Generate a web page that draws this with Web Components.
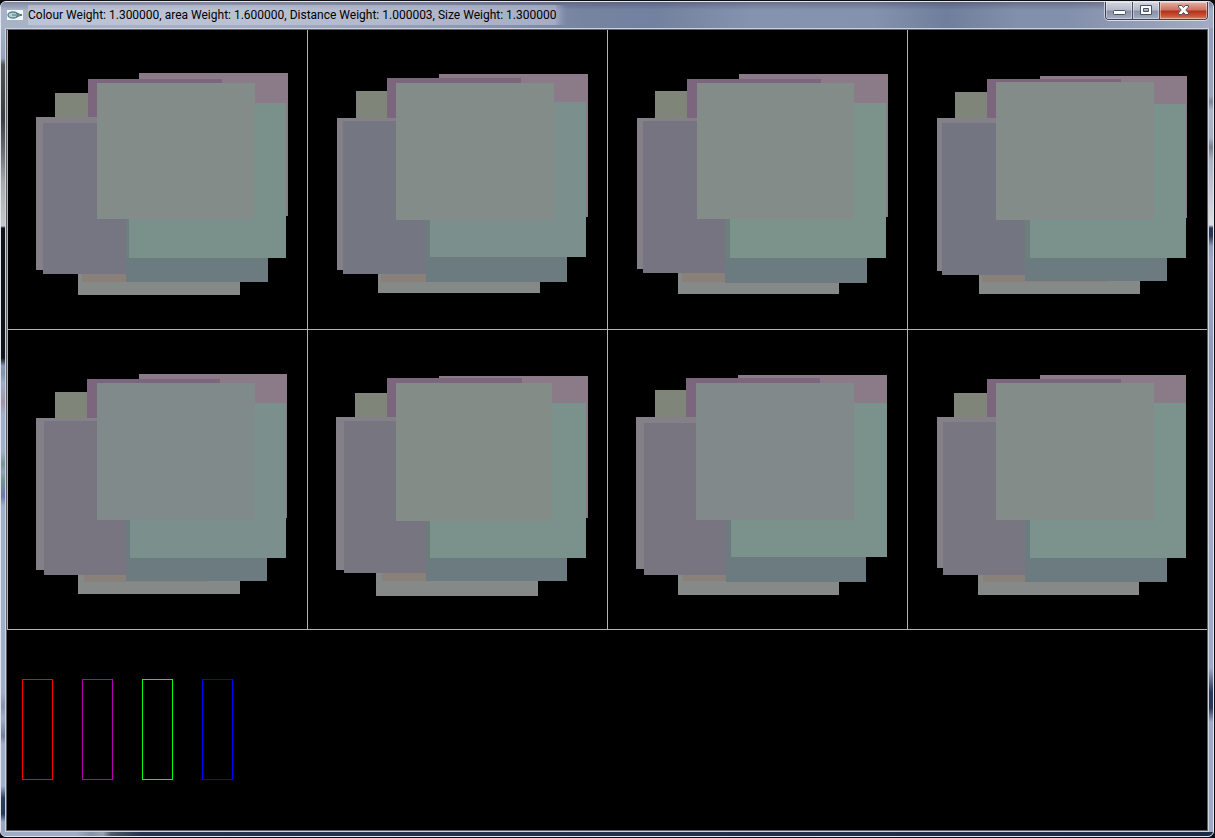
<!DOCTYPE html>
<html lang="en">
<head>
<meta charset="utf-8">
<title>Colour Weight: 1.300000, area Weight: 1.600000, Distance Weight: 1.000003, Size Weight: 1.300000</title>
<style>
  html, body { margin: 0; background: #0c0c12; }
  body { font: 12px/16px "Segoe UI", Roboto, "Liberation Sans", sans-serif; color: #000; }
</style>
</head>
<body>
<glass-window>
  <title-bar slot="title">Colour Weight: 1.300000, area Weight: 1.600000, Distance Weight: 1.000003, Size Weight: 1.300000</title-bar>
  <population-grid></population-grid>
  <weight-bars></weight-bars>
</glass-window>

<script>
const define = (name, html, setup) => {
  const template = document.createElement('template');
  template.innerHTML = html;
  customElements.define(name, class extends HTMLElement {
    constructor() {
      super();
      this.attachShadow({ mode: 'open' }).append(template.content.cloneNode(true));
    }
    connectedCallback() { if (setup) setup(this, this.shadowRoot); }
  });
};

define('glass-window', `
  <style>
    :host {
      display: block; box-sizing: border-box; min-height: 100vh;
      padding: 1px 1px 1px 0; background: #0c0c12;
    }
    .frame {
      display: flex; flex-direction: column; box-sizing: border-box;
      min-height: calc(100vh - 2px);
      border: 1px solid #e3e6ee; border-radius: 6px; overflow: hidden;
      background: #a0aac4;
    }
    .row { display: flex; flex: 1; }
    .edge { width: 4px; flex: none; }
    .left {
      background: linear-gradient(#a4b2c6, #93a2bc 30px, #4d5150 37px, #393d3d 90px, #6c7070 125px,
        #a8abab 155px, #c6c8c8 198px, #0e1315 200px, #0e1315 330px, #8496b8 338px, #8391aa 346px,
        #9faec8 355px, #a195a9 374px, #a0afcb 386px, #a0afcb 424px, #74958f 436px, #93a3b6 444px,
        #74958f 452px, #6d76b5 468px, #a0aec9 478px, #a0aec9 665px, #8793aa 678px, #a0aec9 690px,
        #748096 708px, #a0aec9 716px, #a0aec9 758px, #2a3d5c 770px, #22385a 786px, #9aa8c4 794px);
    }
    .right {
      background: linear-gradient(#929eb8, #9aa5bd 68px, #7c8594 74px, #aeb4ca 82px, #a9afc4 110px,
        #7b7e86 119px, #abb2c4 132px, #dedee1 197px, #2b3554 200px, #2b3554 208px, #919bb6 218px,
        #a3abc8 235px, #8f9ab4 330px, #a3abc8 390px, #a0aac4 640px, #2c3858 664px, #2c3858 680px,
        #a0aac4 694px, #a0aac4);
    }
    .client {
      flex: 1; min-width: 0; background: #000;
      border: 1px solid #5c5f6a; outline: 1px solid #cfd3dd; margin: 1px;
    }
    .bottom {
      height: 4px; flex: none;
      background: linear-gradient(90deg, #a0acc6 75px, #8692a6 90px, #98a2b2 102px, #4e5a68 110px,
        #24344e 140px, #1c2c48);
    }
  </style>
  <div class="frame">
    <slot name="title"></slot>
    <div class="row">
      <div class="edge left"></div>
      <main class="client"><slot></slot></main>
      <div class="edge right"></div>
    </div>
    <div class="bottom"></div>
  </div>`);

define('title-bar', `
  <style>
    :host {
      display: flex; align-items: center; gap: 5px; height: 26px; padding: 0 5px 0 6px; flex: none;
      background:
        linear-gradient(rgba(50,50,80,.35), transparent 8px),
        linear-gradient(90deg, #a9b3c7, #a4adc2 20%, #8d98b2 38%, #7684a2 48%, #7381a0 54%,
          #8593af 62%, #8492ae 72%, #6f7e9c 78%, #8390ab 84%, #8390ab 88%, #a2abc2 100%);
    }
    .logo { flex: none; display: block; }
    h1 {
      flex: 1; min-width: 0; margin: 0; font: inherit; white-space: nowrap; overflow: hidden;
    }
    h1 span {
      display: inline-block; height: 20px; line-height: 20px;
      background: rgba(214,218,232,.45); box-shadow: 0 0 8px 4px rgba(214,218,232,.45);
    }
    .buttons {
      display: flex; align-self: flex-start; box-sizing: border-box; height: 18px;
      border: 1px solid #3c4256; border-top: 0; border-radius: 0 0 4px 4px;
      box-shadow: 0 1px 0 #d9dde8, 1px 0 0 #c8cedc, -1px 0 0 #c8cedc; overflow: hidden;
    }
    button {
      display: grid; place-items: center; box-sizing: border-box; width: 27px; padding: 0; border: 0;
      border-right: 1px solid #4a5064;
      background: linear-gradient(#d0d4dd, #b4bac9 8px, #8890a5 9px, #a4adc2);
      box-shadow: inset 0 0 0 1px rgba(255,255,255,.4);
    }
    .close {
      width: 47px; border-right: 0;
      background: linear-gradient(#e3b0a4, #cc7260 8px, #b23019 9px, #cb5437 14px, #d98468);
    }
    svg { display: block; }
  </style>
  <svg class="logo" width="16" height="10" viewBox="0 0 16 10" aria-hidden="true">
    <rect width="16" height="10" fill="#f4f7f8"/>
    <ellipse cx="6" cy="5" rx="5" ry="3" fill="#b8d0d4" stroke="#4b8791" stroke-width="1.4"/>
    <path d="M5 5h10M9 3l6 2-6 2" fill="none" stroke="#4f747c" stroke-width="1"/>
  </svg>
  <h1><span><slot></slot></span></h1>
  <div class="buttons">
    <button type="button" aria-label="Minimise">
      <svg width="13" height="18" viewBox="0 0 13 18"><rect x=".5" y="8.500" width="12" height="4" rx="1" fill="#fff" stroke="#4b5169"/></svg>
    </button>
    <button type="button" aria-label="Maximise">
      <svg width="12" height="18" viewBox="0 0 12 18"><path fill-rule="evenodd" d="M.5 3.500h11v9H.5zM3.500 6.500v3h5v-3z" fill="#fff" stroke="#4b5169"/></svg>
    </button>
    <button type="button" class="close" aria-label="Close">
      <svg width="13" height="18" viewBox="0 0 13 18"><path d="M1.500 3.500h3.200l1.800 2 1.800-2h3.200v1.500L8.800 8l2.700 3v1.500H8.300l-1.800-2-1.800 2H1.500V11l2.700-3-2.700-3z" fill="#fff" stroke="#5a4a5e"/></svg>
    </button>
  </div>`);

/* One individual: overlapping painted rectangles on a 299-unit canvas. */
define('genome-cell', `
  <style>
    :host { display: block; border: 0 solid #b4b4b4; border-width: 0 0 1px 1px; }
    svg { display: block; width: 100%; height: auto; }
  </style>
  <svg viewBox="0 0 299 299" shape-rendering="crispEdges" role="img" aria-label="Individual"></svg>`,
  (host, root) => {
    const svg = root.querySelector('svg');
    svg.replaceChildren();
    for (const [x0, y0, x1, y1, fill] of host.shapes || []) {
      const rect = document.createElementNS('http://www.w3.org/2000/svg', 'rect');
      const attrs = { x: x0, y: y0, width: x1 - x0, height: y1 - y0, fill };
      for (const key in attrs) rect.setAttribute(key, attrs[key]);
      svg.append(rect);
    }
  });

const population = [
  { pink: [131,43,280,186], purple: [80,49,214], olive: [47,63], grey: [28,87,240], slate: [35,93,244], base: [70,232,265], brown: [74,252], steel: [118,260,252], teal: [121,73,278,228], top: [89,53,247,189], colours: ['#757681','#7a918b','#838c89','#6d807f'] },
  { pink: [131,44,280,187], purple: [79,48,213], olive: [48,61], grey: [29,88,240], slate: [35,91,244], base: [70,232,263], brown: [73,252], steel: [118,259,252], teal: [122,72,278,227], top: [88,53,246,190], colours: ['#747682','#7b908c','#838c89','#6b7d7c'] },
  { pink: [131,44,280,187], purple: [79,49,213], olive: [47,61], grey: [29,88,239], slate: [35,91,243], base: [70,231,264], brown: [74,252], steel: [117,259,253], teal: [122,73,278,228], top: [89,53,246,189], colours: ['#777481','#7b938b','#838c89','#6c7f7c'] },
  { pink: [132,46,279,188], purple: [79,49,213], olive: [47,62], grey: [29,88,241], slate: [34,93,245], base: [71,232,264], brown: [74,252], steel: [117,259,251], teal: [122,74,278,228], top: [88,52,246,190], colours: ['#737581','#7a918c','#838c89','#6c7f7d'] },
  { pink: [131,44,279,188], purple: [79,49,212], olive: [47,62], grey: [28,88,240], slate: [36,91,245], base: [70,232,264], brown: [76,252], steel: [118,259,251], teal: [122,73,278,228], top: [89,53,247,190], colours: ['#787581','#7b908c','#818a8b','#6b7b7f'] },
  { pink: [131,46,280,188], purple: [79,48,214], olive: [47,63], grey: [28,87,240], slate: [36,91,243], base: [68,230,266], brown: [74,251], steel: [118,259,251], teal: [122,73,278,228], top: [88,53,244,191], colours: ['#777680','#7a928b','#838c87','#6b7d7b'] },
  { pink: [130,45,279,188], purple: [78,48,212], olive: [47,60], grey: [28,87,239], slate: [36,93,245], base: [70,231,265], brown: [75,251], steel: [118,258,252], teal: [123,73,279,227], top: [88,53,246,190], colours: ['#787581','#7a928b','#81898a','#6b7b7f'] },
  { pink: [132,45,278,188], purple: [79,49,213], olive: [46,63], grey: [29,87,238], slate: [35,92,245], base: [70,231,265], brown: [75,252], steel: [117,259,252], teal: [122,73,278,228], top: [88,53,246,190], colours: ['#777681','#7b938c','#838c89','#6a7c80'] },
];

const paint = g => [
  [g.olive[0], g.olive[1], 120, 120, '#7f8578'],
  [...g.pink, '#8b7a87'],
  [g.purple[0], g.purple[1], g.purple[2], 130, '#7b667e'],
  [g.grey[0], g.grey[1], 120, g.grey[2], '#838187'],
  [g.base[0], 200, g.base[1], g.base[2], '#858988'],
  [g.brown[0], 200, 200, g.brown[1], '#89807a'],
  [g.slate[0], g.slate[1], g.steel[0], g.slate[2], g.colours[0]],
  [g.steel[0], 150, g.steel[1], g.steel[2], '#6c7b80'],
  [g.steel[0], 150, g.teal[0], g.teal[3], g.colours[3]],
  [...g.teal, g.colours[1]],
  [...g.top, g.colours[2]],
];

define('population-grid', `
  <style>
    :host { display: grid; grid-template-columns: repeat(4, 1fr); }
  </style>`,
  (host, root) => {
    for (const genome of population) {
      const cell = document.createElement('genome-cell');
      cell.shapes = paint(genome);
      root.append(cell);
    }
  });

define('weight-bars', `
  <style>
    :host { display: flex; gap: 29px; padding: 49px 15px; }
    i { box-sizing: border-box; width: 31px; height: 101px; border: 1px solid; }
    .colour { color: #f00; }
    .area { color: #b400b4; }
    .distance { color: #0f0; }
    .size { color: #00f; }
  </style>
  <i class="colour"></i><i class="area"></i><i class="distance"></i><i class="size"></i>`);
</script>
</body>
</html>
